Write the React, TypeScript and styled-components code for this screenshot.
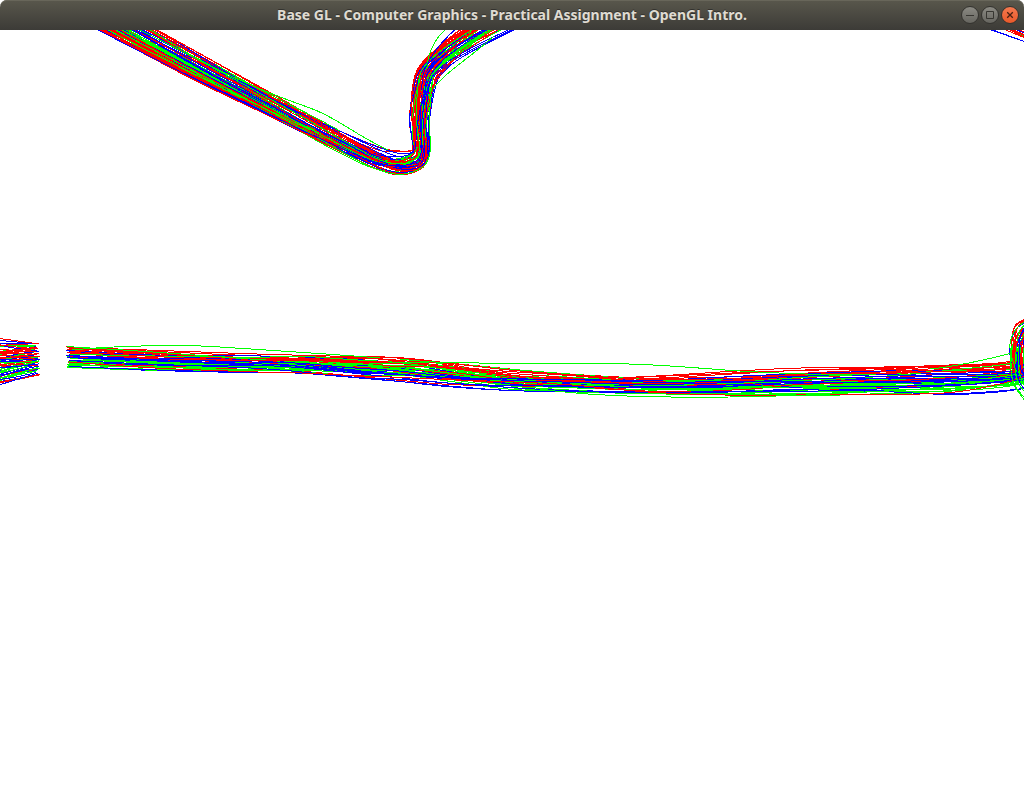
import React from "react";
import styled, { createGlobalStyle } from "styled-components";

const GlobalStyle = createGlobalStyle`
  *, *::before, *::after { box-sizing: border-box; }
  body { margin: 0; background: #ffffff; }
`;

const Window = styled.div`
  display: flex;
  flex-direction: column;
  height: 100vh;
  background: #ffffff;
`;

const TitleBar = styled.header`
  display: grid;
  grid-template-columns: 1fr auto 1fr;
  align-items: center;
  flex: none;
  height: 30px;
  padding: 0 5px;
  border-radius: 7px 7px 0 0;
  background: linear-gradient(#59574c, #3c3b37);
  box-shadow: inset 0 1px 0 #68665a;
`;

const Title = styled.h1`
  grid-column: 2;
  margin: 0;
  font: 700 14px/20px "Noto Sans", sans-serif;
  color: #dfdbd2;
  text-shadow: 0 -1px 0 #33322e;
  white-space: nowrap;
`;

const Controls = styled.div`
  display: flex;
  justify-content: flex-end;
  gap: 2px;
`;

const ControlButton = styled.button<{ $close?: boolean }>`
  display: flex;
  width: 18px;
  height: 18px;
  padding: 0;
  border: 1px solid #34332f;
  border-radius: 50%;
  background: ${(p) =>
    p.$close
      ? "linear-gradient(#f4794f, #e9592a)"
      : "linear-gradient(#8b8a83, #66655f)"};
  color: ${(p) => (p.$close ? "#4a2012" : "#373631")};
`;

const Glyph = styled.svg`
  display: block;
  width: 16px;
  height: 16px;
  fill: none;
  stroke: currentColor;
`;

const Viewport = styled.main`
  flex: 1;
  min-height: 0;
  background: #ffffff;
`;

const Scene = styled.svg`
  display: block;
  width: 100%;
  height: 100%;
  fill: none;
  shape-rendering: crispEdges;
`;

type Color = "r" | "g" | "b";
type Point = [number, number];
/* A cross-section of a bundle: x and y of one side, then of the other. */
type Section = [number, number, number, number];
/* Colour, number of strands, spread, and positions across the bundle. */
type Group = [Color, number, number, number[]];
type Strand = { color: Color; d: string };

const COLORS: Record<Color, string> = {
  r: "#ff0000",
  g: "#00ff00",
  b: "#0000ff",
};

function createRandom(seed: number) {
  let s = seed;
  return () => {
    s = (s + 0x6d2b79f5) | 0;
    let t = Math.imul(s ^ (s >>> 15), 1 | s);
    t = (t + Math.imul(t ^ (t >>> 7), 61 | t)) ^ t;
    return ((t ^ (t >>> 14)) >>> 0) / 4294967296;
  };
}

/* Catmull-Rom spline through the points, written as cubic Béziers. */
function spline(points: Point[]) {
  const f = (n: number) => n.toFixed(2);
  let d = `M${f(points[0][0])} ${f(points[0][1])}`;
  for (let i = 0; i < points.length - 1; i++) {
    const a = points[Math.max(0, i - 1)];
    const b = points[i];
    const c = points[i + 1];
    const e = points[Math.min(points.length - 1, i + 2)];
    d += `C${f(b[0] + (c[0] - a[0]) / 6)} ${f(b[1] + (c[1] - a[1]) / 6)} ${f(
      c[0] - (e[0] - b[0]) / 6
    )} ${f(c[1] - (e[1] - b[1]) / 6)} ${f(c[0])} ${f(c[1])}`;
  }
  return d;
}

function sample(stops: number[], u: number) {
  if (stops.length === 1) return stops[0];
  const p = u * (stops.length - 1);
  const i = Math.min(stops.length - 2, Math.floor(p));
  return stops[i] + (stops[i + 1] - stops[i]) * (p - i);
}

/* Folds a position back into the bundle when it passes one of its sides. */
function fold(t: number) {
  const inside = t < 0 ? -t : t > 1 ? 2 - t : t;
  return Math.max(0, Math.min(1, inside));
}

function bundle(seed: number, sections: Section[], groups: Group[], endJitter = 0): Strand[] {
  const random = createRandom(seed);
  const strands: (Strand & { order: number })[] = [];
  groups.forEach(([color, count, spread, stops]) => {
    for (let k = 0; k < count; k++) {
      const base = (((k + random()) / count) * 2 - 1) * spread;
      const phase = random() * 6.28;
      const rate = 0.4 + random() * 0.5;
      const wave = 0.04 + spread * 0.4;
      const shift = (random() - 0.5) * 2 * endJitter;
      const points = sections.map(([x1, y1, x2, y2], i): Point => {
        const wobble = Math.sin(phase + i * rate) * wave;
        const t = fold(sample(stops, i / (sections.length - 1)) + base + wobble);
        return [x1 + (x2 - x1) * t + shift, y1 + (y2 - y1) * t];
      });
      strands.push({ color, d: spline(points), order: random() });
    }
  });
  return strands.sort((a, b) => a.order - b.order);
}

const valley: Section[] = [
  [117, 7, 55, 7],
  [159, 30, 97, 30],
  [215, 61, 190, 78],
  [296, 106, 277, 121],
  [345, 131, 330, 148],
  [382, 148, 372, 168],
  [401, 151, 400, 175],
  [411, 148, 424, 168],
  [410, 138, 431, 150],
  [409, 118, 430, 122],
  [412, 90, 435, 90],
  [418, 68, 441, 75],
  [436, 48, 463, 57],
  [455, 30, 514, 30],
  [480, 12, 560, 10],
];

const ribbon: Section[] = [
  [68, 346, 69, 368],
  [150, 349, 150, 371],
  [250, 352, 250, 373],
  [300, 352, 300, 374],
  [350, 355, 350, 378],
  [400, 357, 400, 382],
  [450, 362, 450, 387],
  [510, 368, 510, 391],
  [570, 371, 570, 392],
  [650, 373, 650, 395],
  [740, 370, 740, 396],
  [800, 368, 800, 396],
  [880, 367, 880, 396],
  [950, 365, 950, 396],
  [1000, 363, 1000, 392],
  [1030, 357, 1030, 388],
];

const strands: Strand[] = [
  ...bundle(
    11,
    valley,
    [
      ["r", 4, 0.06, [0.06, 0.08, 0.3, 0.7, 0.1, 0.1, 0.4]],
      ["r", 12, 0.18, [0.8, 0.8, 0.6, 0.8, 0.3, 0.2, 0.35]],
      ["r", 16, 0.42, [0.5, 0.5, 0.5, 0.5, 0.5, 0.4, 0.4]],
      ["b", 6, 0.18, [0.3, 0.35, 0.35, 0.6, 0.6, 0.5, 0.5]],
      ["b", 9, 0.45, [0.5, 0.5, 0.5, 0.5, 0.55, 0.5, 0.5]],
      ["b", 2, 0.03, [0.96, 0.9, 0.9, 0.97, 0.95, 0.96, 0.96]],
      ["g", 9, 0.14, [0.6, 0.65, 0.6, 0.35, 0.7, 0.7, 0.4]],
      ["g", 6, 0.3, [0.5, 0.6, 0.7, 0.5, 0.6, 0.5, 0.4]],
    ]
  ),
  ...bundle(
    23,
    ribbon,
    [
      ["r", 10, 0.16, [0.2, 0.4, 0.4, 0.2, 0.3, 0.5, 0.3, 0.2, 0.2]],
      ["r", 3, 0.04, [0.1, 0.3, 0.1, 0.06, 0.5, 0.1, 0.05, 0.04, 0.1]],
      ["r", 6, 0.38, [0.5, 0.5, 0.5, 0.6, 0.5, 0.7, 0.5, 0.5, 0.4]],
      ["b", 9, 0.14, [0.4, 0.5, 0.7, 0.7, 0.5, 0.5, 0.5, 0.45, 0.5]],
      ["b", 4, 0.4, [0.5, 0.5, 0.6, 0.6, 0.6, 0.4, 0.6, 0.5, 0.5]],
      ["b", 2, 0.02, [0.96, 0.96, 0.9, 0.98, 0.98, 0.9, 0.8, 0.96, 0.97]],
      ["g", 12, 0.16, [0.7, 0.7, 0.6, 0.45, 0.55, 0.6, 0.65, 0.6, 0.6]],
      ["g", 9, 0.38, [0.5, 0.6, 0.6, 0.5, 0.6, 0.6, 0.6, 0.6, 0.6]],
    ],
    2
  ),
  ...bundle(
    37,
    [
      [-10, 337, -10, 388],
      [14, 339, 14, 381],
      [37, 341, 37, 375],
    ],
    [
      ["b", 2, 0.02, [0.06]],
      ["r", 12, 0.18, [0.28]],
      ["b", 7, 0.25, [0.4]],
      ["g", 7, 0.15, [0.35]],
      ["r", 11, 0.2, [0.53]],
      ["b", 5, 0.12, [0.52]],
      ["g", 14, 0.17, [0.72, 0.68]],
      ["b", 7, 0.11, [0.84]],
      ["r", 3, 0.05, [0.92]],
    ],
    3
  ),
  ...bundle(
    53,
    [
      [1032, 312, 1040, 344],
      [1015, 325, 1034, 346],
      [1009, 344, 1031, 354],
      [1011, 366, 1031, 370],
      [1017, 374, 1038, 378],
      [1034, 378, 1046, 382],
    ],
    [
      ["b", 10, 0.47, [0.48]],
      ["r", 26, 0.48, [0.52]],
      ["g", 8, 0.45, [0.45]],
    ]
  ),
  ...bundle(
    61,
    [
      [1010, 346, 1026, 346],
      [1010, 368, 1024, 368],
      [1014, 386, 1026, 382],
      [1031, 410, 1034, 392],
    ],
    [
      ["g", 4, 0.4, [0.4]],
      ["b", 1, 0.1, [0.5]],
    ]
  ),
  ...bundle(
    71,
    [
      [1020, 26, 995, 26],
      [1034, 34, 1034, 43],
    ],
    [
      ["r", 10, 0.46, [0.5]],
      ["g", 1, 0.1, [0.6]],
      ["b", 1, 0.1, [0.4]],
    ]
  ),
  /* Loose strands that leave their bundle. */
  { color: "b", d: "M980 26L1034 45" },
  { color: "b", d: "M982 26L1034 45" },
  { color: "r", d: "M100 -4C190 52 250 78 320 122" },
  { color: "g", d: "M195 57C240 83 282 98 310 108S350 132 388 150" },
  { color: "g", d: "M215 64C260 92 300 108 340 131" },
  { color: "g", d: "M450 26C437 35 428 50 427 68" },
  { color: "b", d: "M459 26C443 40 428 56 422 78" },
  { color: "g", d: "M494 36C470 58 445 72 432 90" },
  { color: "r", d: "M462 52C448 66 436 76 431 94" },
  { color: "g", d: "M72 350C110 346 180 344 220 347C280 351 330 354 380 358" },
  { color: "g", d: "M400 359C440 364 470 363 560 363C660 363 690 368 740 371S820 375 860 375" },
  { color: "g", d: "M540 389C580 395 640 398 730 397S850 393 900 390" },
  { color: "g", d: "M930 369C960 366 985 360 1012 353" },
];

function LineScene() {
  return (
    <Scene viewBox="0 30 1024 768" preserveAspectRatio="xMidYMid slice" role="img" aria-label="Colored curves">
      {strands.map((strand, i) => (
        <path key={i} d={strand.d} stroke={COLORS[strand.color]} />
      ))}
    </Scene>
  );
}

export default function App() {
  return (
    <Window>
      <GlobalStyle />
      <TitleBar>
        <Title>Base GL - Computer Graphics - Practical Assignment - OpenGL Intro.</Title>
        <Controls>
          <ControlButton type="button" aria-label="Minimize">
            <Glyph viewBox="0 0 16 16">
              <path d="M4 8.5H12" />
            </Glyph>
          </ControlButton>
          <ControlButton type="button" aria-label="Maximize">
            <Glyph viewBox="0 0 16 16">
              <path d="M4.500 4.500H11.500V11.500H4.500Z" />
            </Glyph>
          </ControlButton>
          <ControlButton type="button" aria-label="Close" $close>
            <Glyph viewBox="0 0 16 16">
              <path d="M5.200 5.200L10.800 10.800M10.800 5.200L5.200 10.800" strokeWidth="1.300" />
            </Glyph>
          </ControlButton>
        </Controls>
      </TitleBar>
      <Viewport>
        <LineScene />
      </Viewport>
    </Window>
  );
}
